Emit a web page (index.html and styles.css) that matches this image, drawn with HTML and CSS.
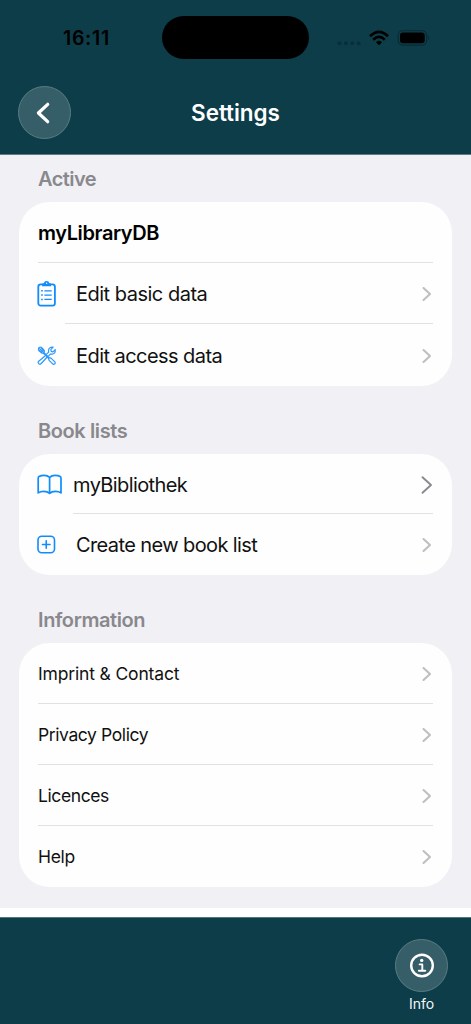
FILE: index.html
```html
<!DOCTYPE html>
<html lang="en">
<head>
<meta charset="utf-8">
<title>Settings</title>
<link rel="stylesheet" href="styles.css">
</head>
<body>
<svg class="defs" width="0" height="0">
  <symbol id="chev" viewBox="0 0 10 16"><path d="M1.5 2 L8 8 L1.5 14" fill="none" stroke="currentColor" stroke-width="2.1" stroke-linecap="round" stroke-linejoin="round"/></symbol>
  <symbol id="chev-large" viewBox="0 0 12 20"><path d="M1.5 2.2 L10 10 L1.5 17.8" fill="none" stroke="currentColor" stroke-width="1.9" stroke-linecap="round" stroke-linejoin="round"/></symbol>
</svg>
<div class="screen">
  <header class="header">
    <div class="status">
      <span class="time">16:11</span>
      <span class="island"></span>
      <svg class="status-icons" width="94" height="18" viewBox="0 0 94 18">
        <g fill="#092f3a"><circle cx="3.5" cy="14.3" r="2"/><circle cx="10" cy="14.3" r="2"/><circle cx="16.3" cy="14.3" r="2"/><circle cx="22.6" cy="14.3" r="2"/></g>
        <g fill="none" stroke="#000" stroke-width="2.7"><path d="M34 7.2 Q43 -1.5 52 7.2"/><path d="M37.2 10.7 Q43 5.2 48.8 10.7"/></g>
        <path d="M40 13.2 Q43 10.4 46 13.2 L43 16.3Z"/>
        <rect x="62.2" y="1.7" width="28.4" height="14.4" rx="4.6" fill="none" stroke="#092c36" stroke-width="1.2"/>
        <rect x="64" y="3.6" width="24.7" height="10.7" rx="3"/>
        <path d="M92 6.7 Q94.6 8.9 92 11.1Z" fill="#092c36"/>
      </svg>
    </div>
    <div class="nav">
      <div class="round">
        <svg width="14" height="22" viewBox="0 0 14 22"><path d="M11.7 2.3 L2.4 11 L11.7 19.7" fill="none" stroke="#fff" stroke-width="3.2" stroke-linecap="round" stroke-linejoin="round"/></svg>
      </div>
      <h1 class="title">Settings</h1>
    </div>
  </header>

  <main class="content">
    <h2 class="heading active">Active</h2>
    <section class="card">
      <div class="row row-name"><span class="label name">myLibraryDB</span></div>
      <div class="row row-tall">
        <svg class="icon" width="20" height="28" viewBox="0 0 20 28" fill="none" stroke="#118cfb">
          <rect x="1.3" y="4.3" width="16.6" height="21.3" rx="2.4" stroke-width="1.8"/>
          <path d="M5.1 6.2 V4.5 Q5.1 3.3 6.8 3.3 Q7.3 1 9.6 1 Q11.9 1 12.4 3.3 Q14.1 3.3 14.1 4.5 V6.2Z" fill="#118cfb" stroke="none"/>
          <circle cx="9.6" cy="3.2" r=".7" fill="#fff" stroke="none"/>
          <path d="M7.4 10.8H14.7M7.4 15.1H14.7M7.4 19.4H14.7" stroke-width="1.3"/>
          <path d="M4.2 10.8H5.8M4.2 15.1H5.8M4.2 19.4H5.8" stroke-width="1.5"/>
        </svg>
        <span class="label basic">Edit basic data</span>
        <svg class="chev"><use href="#chev"/></svg>
      </div>
      <div class="row row-tall inset">
        <svg class="icon" width="20" height="20" viewBox="0 0 20 20" fill="none" stroke="#2d98fa" stroke-width="1.2" stroke-linejoin="round" stroke-linecap="round">
          <path d="M7.7 10.2 L1.7 15.2 Q.6 16.5 1.8 17.7 Q3 18.7 4.2 17.5 L9.8 11.5 M9.6 8.2 L11.7 6.1 Q10.9 2.7 13.3 1.5 Q14.7 .8 16.1 1.2 L13.8 3.7 L14.2 5.4 L16 5.8 L18.2 3.6 Q18.7 7.7 15.3 8.1 L13.5 8 L11.7 9.8"/>
          <path d="M2.2 1.5 Q3.5 .5 5.3 2.1 L7.2 4.4 Q7.8 5.6 6.8 6.3 Q5.5 7.8 4.4 6.8 L2 4.7 Q.8 3.1 2.2 1.5Z M2.8 2.8 L5.5 5.5 M4.3 2.2 L6.6 4.8 M2 4.1 L4.4 6.3"/>
          <path d="M6.8 6.3 L12.2 11.7 L14 12.1 L18.1 16.2 Q18.6 17.4 17.6 18 Q16.5 18.8 15.4 17.7 L12.1 14.3 L11.5 12.4 L6.1 7.1"/>
        </svg>
        <span class="label access">Edit access data</span>
        <svg class="chev"><use href="#chev"/></svg>
      </div>
    </section>

    <h2 class="heading books">Book lists</h2>
    <section class="card">
      <div class="row">
        <svg class="icon book" width="26" height="22" viewBox="0 0 26 22" fill="none" stroke="#118cfb" stroke-width="1.7" stroke-linejoin="round">
          <path d="M12.6 3.4 Q10.6 1.3 7.2 1.3 Q4 1.3 2 2.5 Q1.2 3 1.2 4.2 V18.9 Q3.5 17.4 6.7 17.4 Q10.6 17.4 12.6 19.3 Q14.6 17.4 18.5 17.4 Q21.8 17.4 24 18.9 V4.2 Q24 3 23.2 2.5 Q21.2 1.3 18 1.3 Q14.6 1.3 12.6 3.4 V19.3"/>
        </svg>
        <span class="label biblio">myBibliothek</span>
        <svg class="chev large"><use href="#chev-large"/></svg>
      </div>
      <div class="row inset-wide">
        <svg class="icon" width="20" height="20" viewBox="0 0 20 20" fill="none" stroke="#118cfb" stroke-width="1.6" stroke-linecap="round">
          <rect x="1" y="1.3" width="16.5" height="16.5" rx="3.8"/><path d="M9.25 5.8V13.3M5.5 9.55H13"/>
        </svg>
        <span class="label create">Create new book list</span>
        <svg class="chev"><use href="#chev"/></svg>
      </div>
    </section>

    <h2 class="heading info">Information</h2>
    <section class="card small">
      <div class="row"><span class="label imprint">Imprint &amp; Contact</span><svg class="chev"><use href="#chev"/></svg></div>
      <div class="row"><span class="label privacy">Privacy Policy</span><svg class="chev"><use href="#chev"/></svg></div>
      <div class="row"><span class="label licences">Licences</span><svg class="chev"><use href="#chev"/></svg></div>
      <div class="row"><span class="label help">Help</span><svg class="chev"><use href="#chev"/></svg></div>
    </section>
  </main>

  <footer class="footer">
    <div class="tab">
      <div class="round">
        <svg width="26" height="26" viewBox="0 0 26 26" fill="none" stroke="#fff">
          <circle cx="13" cy="12.5" r="10.8" stroke-width="2.4"/>
          <circle cx="12.7" cy="7.4" r="1.7" fill="#fff" stroke="none"/>
          <path d="M10.6 11.4H13.3V17.5M9.8 17.7H16.3" stroke-width="1.9" stroke-linecap="round" stroke-linejoin="round"/>
        </svg>
      </div>
      <span class="tab-label">Info</span>
    </div>
  </footer>
</div>
</body>
</html>
```

FILE: styles.css
```css
* { box-sizing: border-box; }
body { margin: 0; background: #fff; font-family: Inter, "Liberation Sans", sans-serif; }
.defs { display: block; height: 0; }
.screen { width: 471px; height: 1024px; display: flex; flex-direction: column; overflow: hidden; }

.header { height: 155px; flex: none; background: #0c3d49; border-bottom: 1px solid #5c7c88; }
.status { height: 76px; display: grid; grid-template-columns: 162px 147px 1fr; align-items: center; }
.time { padding-left: 63px; font-size: 19.5px; font-weight: 600; letter-spacing: 0.7px; line-height: 24px; }
.island { height: 43px; margin-top: -1px; border-radius: 22px; background: #000; }
.status-icons { margin-left: 27px; display: block; }
.nav { height: 73px; display: grid; grid-template-columns: 53px 1fr 53px; align-items: center; padding: 0 18px; }
.round { width: 53px; height: 53px; border-radius: 50%; background: #365e69; border: 1px solid #5a7c84; display: flex; align-items: center; justify-content: center; }
.nav .round svg { margin-right: 3px; }
.title { margin: 0; text-align: center; color: #fff; font-size: 22.5px; font-weight: 600; line-height: 28px; letter-spacing: -0.05px; }

.content { height: 753px; flex: none; background: #f1f0f5; padding: 0 19px; }
.heading { margin: 0; padding-left: 19px; color: #89888d; font-size: 20px; font-weight: 600; line-height: 24px; white-space: nowrap; letter-spacing: -0.4px; }
.heading.active { height: 47px; padding-top: 12px; letter-spacing: -0.55px; }
.heading.books { height: 68.3px; padding-top: 33px; }
.heading.info { height: 68px; padding-top: 33px; }
.card { background: #fefefe; border-radius: 31px; padding: 0 19px; color: #111; font-size: 20px; }
.row { height: 60.7px; display: flex; align-items: center; position: relative; padding-top: 1px; }
.row-name { height: 60.5px; padding-top: 2px; }
.row-tall { height: 61.5px; padding-top: 2px; }
.row + .row::before { content: ""; position: absolute; top: -1px; left: 0; right: 0; height: 1px; background: #e0e1e5; }
.row.inset::before { left: 27px; }
.row.inset-wide::before { left: 35px; }
.icon { flex: none; margin: 0 19px 0 -1px; }
.icon.book { margin-right: 10px; }
.label { white-space: nowrap; line-height: 24px; }
.name { color: #000; font-weight: 600; letter-spacing: -0.4px; }
.basic { letter-spacing: -0.5px; }
.access { letter-spacing: -0.56px; }
.biblio { letter-spacing: -0.6px; }
.create { letter-spacing: -0.6px; }
.imprint { letter-spacing: -0.16px; }
.privacy { letter-spacing: -0.4px; }
.licences { letter-spacing: -0.4px; }
.help { letter-spacing: -0.35px; }
.chev { width: 10px; height: 16px; margin-left: auto; margin-right: 1.5px; color: #bfbfc2; flex: none; }
.chev.large { width: 12px; height: 20px; margin-right: 0; color: #89898e; }
.small { font-size: 17.5px; }
.small .row { height: 60.9px; }

.footer { margin-top: 9px; height: 107px; flex: none; background: #0c3d49; border-top: 1px solid #527580; display: flex; justify-content: flex-end; padding: 21px 23px 0 0; }
.tab { width: 53px; display: flex; flex-direction: column; align-items: center; }
.tab-label { color: #f5f8f8; font-size: 14px; line-height: 18px; margin-top: 3px; }
```
